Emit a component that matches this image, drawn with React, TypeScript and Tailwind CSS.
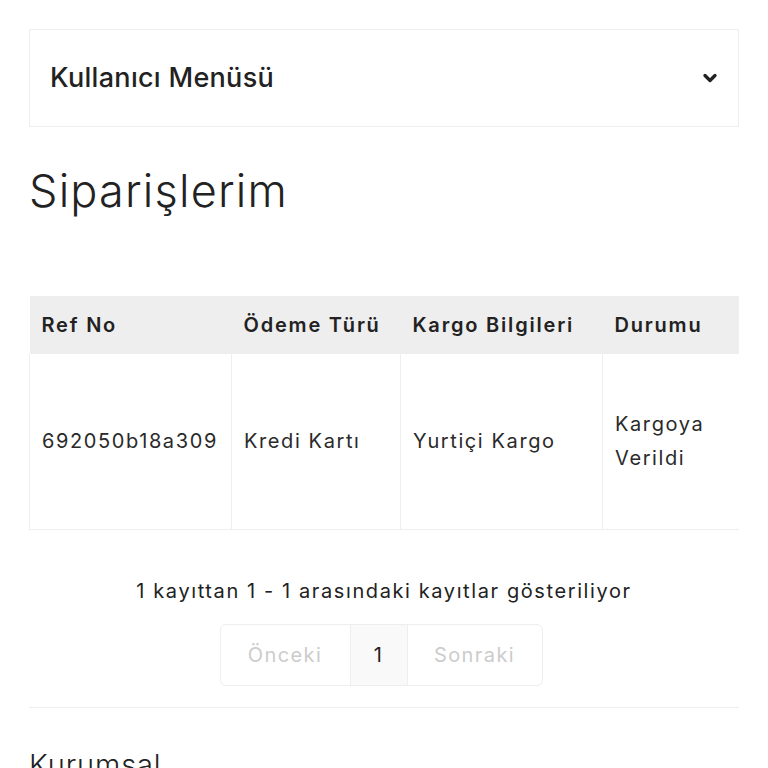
import { ChevronDown } from "lucide-react"

const rows = [
  { ref: "692050b18a309", odeme: "Kredi Kartı", kargo: "Yurtiçi Kargo", durum: "Kargoya Verildi" },
]

const App = () => {
  return (
    <div className="min-h-[768px] bg-white px-[29px] pt-[29px] text-[#222] font-['Inter','Noto_Sans',sans-serif]">
      <div className="flex h-[98px] items-center justify-between border border-[#eee] pl-[20px] pr-[18px]">
        <span className="text-[27px] font-medium tracking-[0.3px]">Kullanıcı Menüsü</span>
        <ChevronDown size={20} strokeWidth={4} />
      </div>

      <h1 className="mt-[34px] text-[45px] font-light leading-[60px] tracking-[1.2px]">Siparişlerim</h1>

      <div className="mt-[75px] w-[710px] overflow-hidden">
        <table className="w-[723px] table-fixed border-collapse text-[20px]">
          <colgroup>
            <col className="w-[202px]" />
            <col className="w-[169px]" />
            <col className="w-[202px]" />
            <col className="w-[150px]" />
          </colgroup>
          <thead>
            <tr className="h-[58px] bg-[#eee] text-left tracking-[1.8px]">
              <th className="px-[12px] font-semibold">Ref No</th>
              <th className="px-[12px] font-semibold whitespace-nowrap">Ödeme Türü</th>
              <th className="px-[12px] font-semibold whitespace-nowrap">Kargo Bilgileri</th>
              <th className="px-[12px] font-semibold">Durumu</th>
            </tr>
          </thead>
          <tbody>
            {rows.map(r => {
              return (
                <tr key={r.ref} className="h-[175px] tracking-[1.6px] text-[#2a2a2a]">
                  <td className="border border-t-0 border-[#eee] px-[12px] leading-[34px]">{r.ref}</td>
                  <td className="border border-t-0 border-[#eee] px-[12px] leading-[34px]">{r.odeme}</td>
                  <td className="border border-t-0 border-[#eee] px-[12px] leading-[34px]">{r.kargo}</td>
                  <td className="border border-t-0 border-[#eee] px-[12px] leading-[34px]">{r.durum}</td>
                </tr>
              )
            })}
          </tbody>
        </table>
      </div>

      <p className="mt-[45px] text-center text-[20px] leading-[32px] tracking-[1.6px]">1 kayıttan 1 - 1 arasındaki kayıtlar gösteriliyor</p>

      <div className="mt-[17px] flex justify-center pr-[6px]">
        <div className="flex h-[62px] overflow-hidden rounded-[6px] border border-[#eee] text-[20px] tracking-[1.4px]">
          <span className="flex w-[129px] items-center justify-center text-[#ccc]">Önceki</span>
          <span className="flex w-[58px] items-center justify-center border-x border-[#eee] bg-[#f9f9f9]">1</span>
          <span className="flex w-[134px] items-center justify-center text-[#ccc]">Sonraki</span>
        </div>
      </div>

      <div className="mt-[21px] border-t border-[#eee]"></div>

      <h2 className="mt-[35px] text-[29px] font-light tracking-[0.9px]">Kurumsal</h2>
    </div>
  )
}

export default App
